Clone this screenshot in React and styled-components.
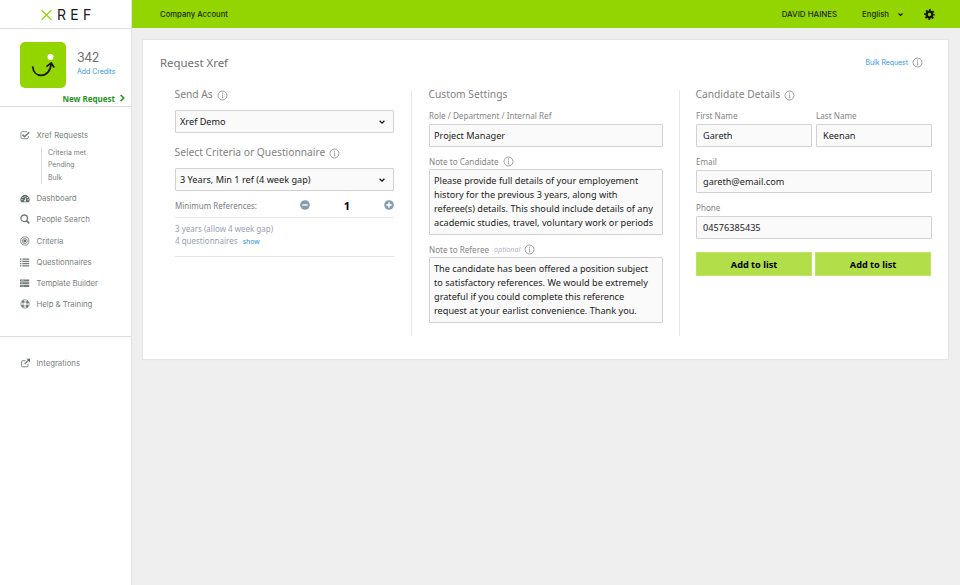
import React from 'react';
import styled, { createGlobalStyle } from 'styled-components';

const GlobalStyle = createGlobalStyle`
* {
  box-sizing: border-box;
}
body {
  margin: 0;
  background-color: #efefef;
  font-family: "Noto Sans", sans-serif;
}
`;
const Container = styled.div`
display: flex;
height: 100vh;
min-height: 585px;
overflow: hidden;
white-space: nowrap;
`;
const Sidebar = styled.aside`
flex: none;
width: 132px;
background-color: white;
border-right: 1px solid #e4e4e4;
font-family: Inter, sans-serif;
color: #7a7f7d;
`;
const LogoBar = styled.div`
display: flex;
align-items: center;
height: 29px;
padding-left: 41px;
border-bottom: 1px solid #dcdcdc;
`;
const LogoText = styled.span`
margin-left: 5px;
padding-top: 1px;
font-size: 14px;
line-height: 28px;
letter-spacing: 4.3px;
color: #1b1b1b;
`;
const Profile = styled.div`
display: grid;
grid-template-columns: 46px 1fr;
column-gap: 11px;
height: 78px;
padding: 13px 6px 0 20px;
border-bottom: 1px solid #dcdcdc;
`;
const Avatar = styled.div`
height: 46px;
border-radius: 5px;
background-color: #93d500;
`;
const Credits = styled.div`
padding-top: 8px;
`;
const CreditCount = styled.div`
font-size: 12.4px;
line-height: 16px;
letter-spacing: -0.5px;
color: #6e6e6e;
`;
const Link = styled.a`
font-family: Inter, sans-serif;
font-size: 6.9px;
color: #3498db;
cursor: pointer;
`;
const CreditLink = styled(Link)`
display: block;
line-height: 12px;
`;
const NewRequest = styled.button`
grid-column: 1 / 3;
display: flex;
align-items: center;
justify-content: flex-end;
gap: 4px;
height: 18px;
padding: 0;
margin-top: 1px;
border: none;
background: none;
font: 700 8px "Noto Sans", sans-serif;
color: #2a9423;
cursor: pointer;
`;
const Nav = styled.nav`
padding-top: 17px;
height: 230px;
border-bottom: 1px solid #dcdcdc;
`;
const NavItem = styled.a`
display: flex;
align-items: center;
gap: 6.5px;
height: 21.2px;
padding-left: 20px;
font-size: 7.78px;
cursor: pointer;
svg {
  flex: none;
}
`;
const SubNav = styled.div`
margin: 3px 0 6.4px 41px;
padding-left: 6px;
border-left: 1px solid #dedede;
`;
const SubItem = styled.a`
display: block;
font-size: 6.87px;
line-height: 12.5px;
&:first-child {
  margin-top: -1.5px;
}
&:last-child {
  margin-bottom: -3px;
}
`;
const BottomNav = styled.div`
padding-top: 15.5px;
`;
const Main = styled.main`
flex: 1;
min-width: 0;
`;
const TopBar = styled.header`
display: flex;
align-items: center;
height: 28px;
padding: 0 25px 0 28px;
background-color: #93d500;
font: 500 7.75px Inter, sans-serif;
color: #1d2a00;
`;
const Account = styled.span`
flex: 1;
font-size: 7.68px;
`;
const User = styled.span`
margin-right: 25px;
font-size: 7.9px;
`;
const Language = styled.span`
display: flex;
align-items: center;
gap: 9px;
margin-right: 21px;
`;
const Card = styled.section`
width: 805px;
height: 319px;
margin: 12px 0 0 11px;
padding: 15px 17px 0;
background-color: white;
box-shadow: 0 0 1px 1px #e6e6e6;
`;
const CardHeader = styled.div`
display: flex;
align-items: center;
justify-content: space-between;
height: 15px;
padding-right: 8px;
`;
const Title = styled.h1`
margin: 0;
font-size: 11.4px;
line-height: 16px;
font-weight: 400;
color: #707070;
`;
const BulkLink = styled.div`
display: flex;
align-items: center;
gap: 4px;
svg {
  margin-top: -1px;
}
`;
const Columns = styled.div`
display: grid;
grid-template-columns: 251px 268px 253px;
height: 246px;
margin-top: 20px;
`;
const Column = styled.div`
padding: ${props => props.pad};
border-left: ${props => props.divided ? "1px solid #e8e8e8" : "none"};
`;
const SubTitle = styled.h2`
display: flex;
align-items: center;
gap: 4px;
height: ${props => props.tall ? "35px" : "20px"};
margin: 0 0 0 -0.5px;
padding: ${props => props.tall ? "3.5px 0 0" : "0 0 12px"};
font-size: 10.25px;
font-weight: 400;
line-height: 14px;
color: #828282;
svg {
  margin-top: 3px;
}
`;
const Select = styled.div`
display: flex;
align-items: center;
justify-content: space-between;
height: 23px;
padding: 0 8px 0 4px;
border: 1px solid #d2d2d2;
border-radius: 1px;
background-color: #fafafa;
font-size: 9.17px;
color: #161616;
`;
const Minimum = styled.div`
display: flex;
align-items: center;
height: 26.5px;
padding-top: 3px;
border-bottom: 1px solid #e8e8e8;
font-size: 8px;
color: #7d7d7d;
`;
const MinimumLabel = styled.span`
width: 125px;
`;
const Count = styled.b`
flex: 1;
text-align: center;
font-size: 11px;
color: black;
`;
const Summary = styled.div`
height: 39.5px;
padding-top: 5.5px;
border-bottom: 1px solid #e5e5e5;
font-size: 8px;
line-height: 11.7px;
color: #9a9fb0;
`;
const ShowLink = styled.a`
margin-left: 3px;
font-size: 6.9px;
color: #1f93d8;
`;
const Label = styled.label`
display: flex;
align-items: center;
height: ${props => props.height || 14}px;
padding: ${props => props.height ? "6px 0 0" : "0 0 3px"};
gap: 4px;
font-size: 8.13px;
color: #858585;
`;
const Optional = styled.em`
margin-left: 1px;
font-size: 7.1px;
color: #b0b3c0;
`;
const Input = styled.input`
display: block;
width: 100%;
height: 23px;
padding: 0 ${props => props.indent || 4}px;
border: 1px solid #d2d2d2;
border-radius: 1px;
background-color: #fafafa;
font: 9.17px "Noto Sans", sans-serif;
color: #222;
outline: none;
`;
const TextArea = styled.textarea`
display: block;
width: 100%;
height: 66px;
padding: 4.2px 4px;
border: 1px solid #d2d2d2;
border-radius: 1px;
background-color: #fafafa;
font: 9.17px/13.8px "Noto Sans", sans-serif;
color: #222;
white-space: pre;
resize: none;
overflow: hidden;
outline: none;
`;
const Pair = styled.div`
display: grid;
grid-template-columns: 116px 116px;
gap: 4px;
`;
const Buttons = styled(Pair)`
gap: 3px;
margin-top: 13px;
`;
const Button = styled.button`
height: 24px;
padding: 0;
border: 1px solid #bde466;
background-color: #b2de49;
font: 700 9.17px "Noto Sans", sans-serif;
color: black;
cursor: pointer;
`;

const InfoIcon = () => (
    <svg width="11" height="11" viewBox="0 0 11 11" fill="none" stroke="#858585" strokeWidth="0.8">
        <circle cx="5.5" cy="5.5" r="4.5"/>
        <path d="M4.9 4.8h.7v3.1M4.8 7.9h1.6" strokeWidth=".7"/>
        <circle cx="5.4" cy="3.1" r="0.55" fill="#858585" stroke="none"/>
    </svg>
);
const Chevron = ({ size = 6 }) => (
    <svg width={size} height={size} viewBox="0 0 6 6" fill="none" stroke="#161616" strokeWidth="1.3">
        <path d="M.6 1.8L3 4.2l2.4-2.4"/>
    </svg>
);
const NavIcon = ({ children }) => (
    <svg width="10" height="10" viewBox="0 0 10 10" fill="none" stroke="#717a76" strokeWidth="1">{children}</svg>
);
const RoundIcon = ({ plus }) => (
    <svg width="10" height="10" viewBox="0 0 10 10">
        <circle cx="5" cy="5" r="4.8" fill="#869db0"/>
        <path d={plus ? "M2.3 5h5.4M5 2.3v5.4" : "M2.3 5h5.4"} stroke="white" strokeWidth="1.4"/>
    </svg>
);

const icons = {
    check: <><path d="M8.3 6v1.4a1.3 1.3 0 0 1-1.3 1.3H2.2A1.3 1.3 0 0 1 .9 7.4V3a1.3 1.3 0 0 1 1.3-1.3h5" strokeWidth=".8"/><path d="M2.5 4.6l2.1 2.1L9.2 2.2" strokeWidth="1.5"/></>,
    dashboard: <><path d="M1.2 9.2A4.6 4.6 0 1 1 8.8 9.2z" fill="#66706c" stroke="none"/><path d="M5 7.8l.7-3" stroke="white" strokeWidth=".8"/><g fill="white" stroke="none"><circle cx="5" cy="7.8" r=".9"/><circle cx="2" cy="6.6" r=".6"/><circle cx="2.9" cy="4.5" r=".6"/><circle cx="5" cy="3.4" r=".5"/><circle cx="7.3" cy="4.5" r=".6"/><circle cx="8.1" cy="6.6" r=".6"/></g></>,
    search: <><circle cx="4.2" cy="4.3" r="3.3" strokeWidth="1.3"/><path d="M6.6 6.7l2.7 2.7" strokeWidth="1.7"/></>,
    target: <><circle cx="4.8" cy="5" r="4.1" strokeWidth=".8"/><circle cx="4.8" cy="5" r="2.5" strokeWidth=".8"/><circle cx="4.8" cy="5" r="1.4" fill="#66706c" stroke="none"/></>,
    list: <path d="M0 2.2h1.4M0 4.4h1.4M0 6.6h1.4M0 8.8h1.4M2.3 2.2H9.2M2.3 4.4H9.2M2.3 6.6H9.2M2.3 8.8H9.2" strokeWidth="1.3"/>,
    server: <><path d="M0 2.6h9.2M0 5.3h9.2M0 8h9.2" strokeWidth="2"/><path d="M1 2.6h3M1 5.3h2M1 8h3" stroke="#c4c9c7" strokeWidth=".6"/></>,
    help: <><circle cx="5" cy="5" r="4.2" strokeWidth=".7"/><circle cx="5" cy="5" r="2.1" strokeWidth=".7"/><circle cx="5" cy="5" r="3.2" strokeWidth="2" strokeDasharray="2.5 2.526" strokeDashoffset="-1.26"/></>,
    external: <><path d="M8 6v1.8a1 1 0 0 1-1 1H2.6a1 1 0 0 1-1-1V3.7a1 1 0 0 1 1-1h2.8" strokeWidth=".9"/><path d="M4.6 6L8.6 2" strokeWidth="1.2"/><path d="M6.4 .8H10v3.6z" fill="#66706c" stroke="none"/></>,
};

const links = [
    ["dashboard", "Dashboard"],
    ["search", "People Search"],
    ["target", "Criteria"],
    ["list", "Questionnaires"],
    ["server", "Template Builder"],
    ["help", "Help & Training"],
];

const candidateNote = `Please provide full details of your employement
history for the previous 3 years, along with
referee(s) details. This should include details of any
academic studies, travel, voluntary work or periods`;
const refereeNote = `The candidate has been offered a position subject
to satisfactory references. We would be extremely
grateful if you could complete this reference
request at your earlist convenience. Thank you.`;

const App = () => {
    return (
        <>
        <GlobalStyle/>
        <Container>
            <Sidebar>
                <LogoBar>
                    <svg width="11" height="11" viewBox="0 0 11 11" fill="none" stroke="#93d500" strokeWidth="1.2">
                        <path d="M.6 1.2L4.7 5.2a1.2 1.2 0 0 0 1.6 0L10.4 1.2M.6 10.8L4.7 6.8a1.2 1.2 0 0 1 1.6 0L10.4 10.8"/>
                    </svg>
                    <LogoText>REF</LogoText>
                </LogoBar>
                <Profile>
                    <Avatar>
                        <svg width="46" height="46" viewBox="0 0 46 46" fill="none" stroke="#161616" strokeWidth="1.7">
                            <circle cx="30.5" cy="15" r="3" fill="white" stroke="none"/>
                            <path d="M12.6 24.3C13.2 30 16.6 33.4 21 33.4c5.6 0 9.7-4.6 10.2-12"/>
                            <path d="M26.4 24.6l4.8-3.6 3 4.4"/>
                        </svg>
                    </Avatar>
                    <Credits>
                        <CreditCount>342</CreditCount>
                        <CreditLink>Add Credits</CreditLink>
                    </Credits>
                    <NewRequest>
                        New Request
                        <svg width="6" height="8" viewBox="0 0 6 8" fill="none" stroke="#2a9423" strokeWidth="1.6">
                            <path d="M1.7 1l3 3-3 3"/>
                        </svg>
                    </NewRequest>
                </Profile>
                <Nav>
                    <NavItem><NavIcon>{icons.check}</NavIcon>Xref Requests</NavItem>
                    <SubNav>
                        <SubItem>Criteria met</SubItem>
                        <SubItem>Pending</SubItem>
                        <SubItem>Bulk</SubItem>
                    </SubNav>
                    {links.map(([icon, text]) => (
                        <NavItem key={text}><NavIcon>{icons[icon]}</NavIcon>{text}</NavItem>
                    ))}
                </Nav>
                <BottomNav>
                    <NavItem><NavIcon>{icons.external}</NavIcon>Integrations</NavItem>
                </BottomNav>
            </Sidebar>
            <Main>
                <TopBar>
                    <Account>Company Account</Account>
                    <User>DAVID HAINES</User>
                    <Language>English <Chevron size={5}/></Language>
                    <svg width="11" height="11" viewBox="0 0 11 11" fill="none" stroke="#101800">
                        <circle cx="5.5" cy="5.5" r="2.8" strokeWidth="2.2"/>
                        <circle cx="5.5" cy="5.5" r="4.5" strokeWidth="1.8" strokeDasharray="1.8 1.734" strokeDashoffset=".9"/>
                    </svg>
                </TopBar>
                <Card>
                    <CardHeader>
                        <Title>Request Xref</Title>
                        <BulkLink><Link>Bulk Request</Link><InfoIcon/></BulkLink>
                    </CardHeader>
                    <Columns>
                        <Column pad="0 17px 0 15px">
                            <SubTitle>Send As <InfoIcon/></SubTitle>
                            <Select>Xref Demo <Chevron/></Select>
                            <SubTitle tall>Select Criteria or Questionnaire <InfoIcon/></SubTitle>
                            <Select>3 Years, Min 1 ref (4 week gap) <Chevron/></Select>
                            <Minimum>
                                <MinimumLabel>Minimum References:</MinimumLabel>
                                <RoundIcon/>
                                <Count>1</Count>
                                <RoundIcon plus/>
                            </Minimum>
                            <Summary>
                                <div>3 years (allow 4 week gap)</div>
                                <div>4 questionnaires <ShowLink>show</ShowLink></div>
                            </Summary>
                        </Column>
                        <Column divided pad="0 16px 0 17px">
                            <SubTitle>Custom Settings</SubTitle>
                            <Label>Role / Department / Internal Ref</Label>
                            <Input defaultValue="Project Manager"/>
                            <Label height={22}>Note to Candidate <InfoIcon/></Label>
                            <TextArea defaultValue={candidateNote}/>
                            <Label height={22}>Note to Referee <Optional>optional</Optional><InfoIcon/></Label>
                            <TextArea defaultValue={refereeNote}/>
                        </Column>
                        <Column divided pad="0 0 0 16px">
                            <SubTitle>Candidate Details <InfoIcon/></SubTitle>
                            <Pair>
                                <div>
                                    <Label>First Name</Label>
                                    <Input indent={6} defaultValue="Gareth"/>
                                </div>
                                <div>
                                    <Label>Last Name</Label>
                                    <Input indent={6} defaultValue="Keenan"/>
                                </div>
                            </Pair>
                            <Label height={23}>Email</Label>
                            <Input indent={6} defaultValue="gareth@email.com"/>
                            <Label height={23}>Phone</Label>
                            <Input indent={6} defaultValue="04576385435"/>
                            <Buttons>
                                <Button>Add to list</Button>
                                <Button>Add to list</Button>
                            </Buttons>
                        </Column>
                    </Columns>
                </Card>
            </Main>
        </Container>
        </>
    );
}

export default App;
